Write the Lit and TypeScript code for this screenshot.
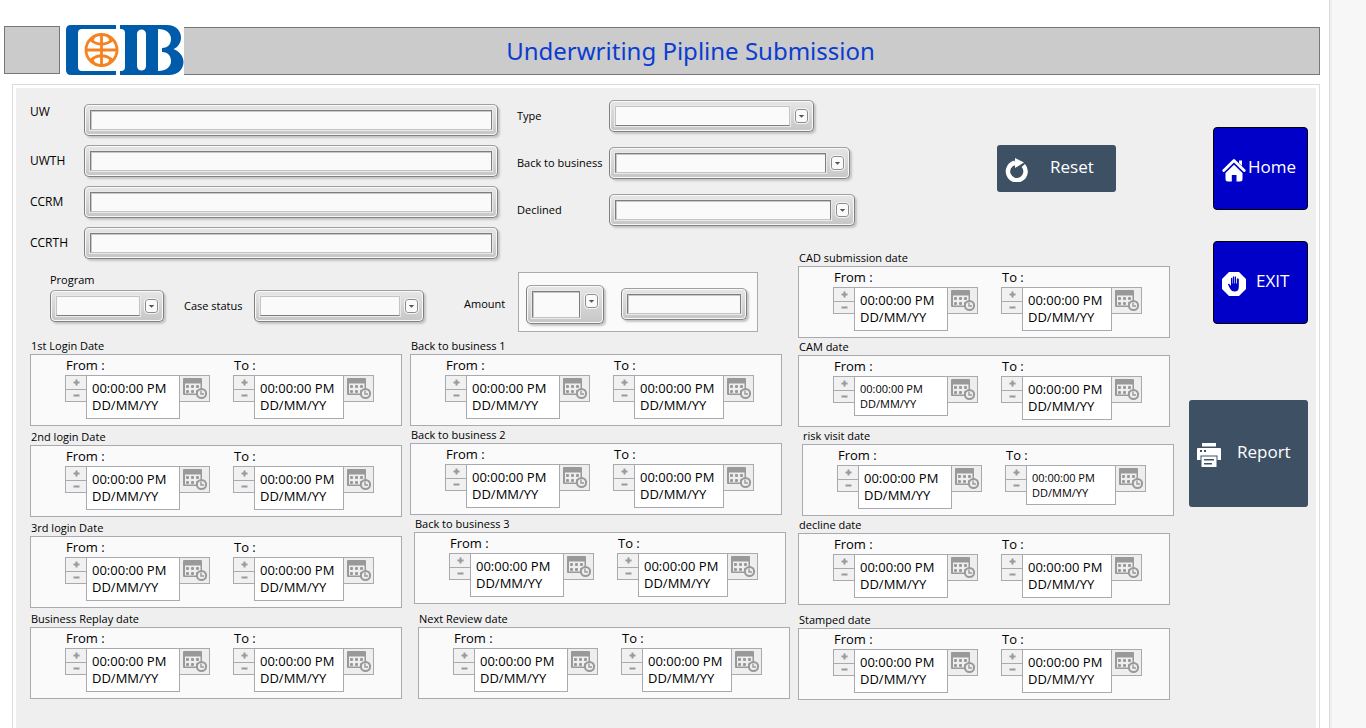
import { LitElement, html, svg, css, nothing } from "lit";
import { customElement } from "lit/decorators.js";
import { classMap } from "lit/directives/class-map.js";

interface DateGroup {
  id: string;
  title: string;
  shift?: "one" | "two";
  spaced?: boolean;
  compact?: "from" | "to";
}

const LOGIN_DATES: DateGroup[] = [
  { id: "login1", title: "1st Login Date" },
  { id: "login2", title: "2nd login Date" },
  { id: "login3", title: "3rd login Date" },
  { id: "replay", title: "Business Replay date" },
];

const BACK_DATES: DateGroup[] = [
  { id: "back1", title: "Back to business 1" },
  { id: "back2", title: "Back to business 2" },
  { id: "back3", title: "Back to business 3", shift: "one" },
  { id: "review", title: "Next Review date", shift: "two", spaced: true },
];

const DECISION_DATES: DateGroup[] = [
  { id: "cad", title: "CAD submission date" },
  { id: "cam", title: "CAM date", compact: "from" },
  { id: "risk", title: "risk visit date", shift: "one", compact: "to" },
  { id: "decline", title: "decline date" },
  { id: "stamped", title: "Stamped date", spaced: true },
];

const EMPTY_DATE = "00:00:00 PM\nDD/MM/YY";

const logo = html`<svg class="logo" viewBox="0 0 118 50" role="img" aria-label="CIB">
  <path fill="#005bab" d="M5 0H50V4H16Q12 4 12 8V42Q12 46 16 46H50V50H5Q0 50 0 45V5Q0 0 5 0Z" />
  <path
    fill="#005bab"
    fill-rule="evenodd"
    d="M54 0H101C110 0 115 6 115 12.500C115 18 112 22 107.500 24C113 26 117.500 31 117.500 37C117.500 44 112 50 103 50H54V46H55Q59 46 59 42V8Q59 4 55 4H54Z
       M71 9V41C71 47 80 47 80 41V9C80 3 71 3 71 9Z
       M92 4V46C100 46 105 42 105 36C105 30 101 27 96 27V23C101 23 105 20 105 14C105 8 100 4 92 4Z"
  />
  <g fill="none" stroke="#f58220" stroke-width="2.800">
    <circle cx="35.500" cy="25" r="15.500" />
    <path d="M35.500 9V41M20 25H51M24 14.500Q35.500 24 47 14.500M24 35.500Q35.500 26 47 35.500" />
    <path stroke-width="2" d="M30 10Q26 14 27 17M41 10Q45 14 44 17M30 40Q26 36 27 33M41 40Q45 36 44 33" />
  </g>
</svg>`;

const resetIcon = html`<svg class="icon" viewBox="0 0 24 24" aria-hidden="true">
  <path fill="none" stroke="#fff" stroke-width="4.500" d="M18.300 7.500A8.800 8.800 0 1 1 10 4.800" />
  <path fill="#fff" d="M10 0L19 4.500L10 10Z" />
</svg>`;

const homeIcon = html`<svg class="icon" viewBox="0 0 24 24" aria-hidden="true">
  <path fill="none" stroke="#fff" stroke-width="2.800" stroke-linecap="round" stroke-linejoin="round" d="M1.800 12.500L12 2.600L22.200 12.500" />
  <path fill="#fff" d="M17 2.500H20V8L17 5Z" />
  <path fill="#fff" d="M12 6.800L20.500 15V21Q20.500 23.500 18 23.500H14.500V17H9.800V23.500H6Q3.500 23.500 3.500 21V15Z" />
</svg>`;

const exitIcon = html`<svg class="icon" viewBox="0 0 24 24" aria-hidden="true">
  <path fill="#fff" d="M7 0H17L24 7V17L17 24H7L0 17V7Z" />
  <path
    fill="#0000c8"
    d="M9 14V6.500Q9.600 5 10.300 6.500V11.500H10.800V5Q11.400 3.500 12.100 5V11.500H12.700V5Q13.300 3.500 14 5V11.500H14.800V7Q15.800 5.500 16.800 7V15Q16.800 19.500 12.500 19.500Q9.600 19.500 8.300 17L6 12.500Q6.500 11.200 7.800 12.500Z"
  />
</svg>`;

const printIcon = html`<svg class="icon" viewBox="0 0 24 24" aria-hidden="true">
  <path fill="#fff" d="M5 0H19V3.500H5Z" />
  <path fill="#fff" fill-rule="evenodd" d="M1 5H23Q24 5 24 6V17H20.500V12.500H3.500V17H0V6Q0 5 1 5ZM3 7V9H5V7ZM7 7V9H9V7Z" />
  <path fill="#fff" fill-rule="evenodd" d="M4.500 13.500H19.500V24H4.500ZM7 16V17.500H17V16ZM7 20V21.500H15V20Z" />
</svg>`;

const dots = [6, 11, 16].map((x) => [9, 14].map((y) => svg`<rect x=${x} y=${y} width="3" height="3" rx="1" />`));

const calendarIcon = html`<svg class="calendar-icon" viewBox="0 0 29 25" aria-hidden="true">
  <g fill="#999">
    <path fill-rule="evenodd" d="M4 2H21Q22 2 22 3V19H4Q3 19 3 18V3Q3 2 4 2ZM5 7.500V17.500H20.500V7.500Z" />
    ${dots}
  </g>
  <circle cx="21.500" cy="17.500" r="4.600" fill="#eee" stroke="#999" stroke-width="2" />
  <path fill="none" stroke="#999" stroke-width="1.400" d="M21 14.500V18H24" />
</svg>`;

const dropArrow = html`<span class="drop" aria-hidden="true">
  <svg viewBox="0 0 12 12"><path fill="#555" d="M3 5H9L6 8Z" /></svg>
</span>`;

@customElement("app-root")
export class AppRoot extends LitElement {
  static styles = css`
    :host {
      display: flex;
      min-height: 100vh;
      background: #fff;
      color: #000;
      font: 11px/16px "Segoe UI", "Open Sans", "Noto Sans", sans-serif;
    }
    * {
      box-sizing: border-box;
    }
    button,
    input,
    select,
    textarea {
      font: inherit;
      color: inherit;
      margin: 0;
    }
    label {
      white-space: nowrap;
    }
    .page {
      flex: 1;
      min-width: 0;
      display: flex;
      flex-direction: column;
    }
    .gutter {
      flex: 0 0 37px;
      background: #f7f7f7;
      border-left: 1px solid #d9d9d9;
      box-shadow: inset 2px 0 #efefef;
    }
    .header {
      display: flex;
      align-items: center;
      padding: 25px 9px 0 4px;
    }
    .stub,
    .bar {
      height: 48px;
      background: #cbcbcb;
      border: 1px solid #777;
    }
    .stub {
      flex: 0 0 56px;
      margin-right: 6px;
    }
    .logo {
      flex: 0 0 118px;
      height: 50px;
    }
    .bar {
      flex: 1;
      align-self: flex-end;
      display: flex;
      align-items: center;
      justify-content: center;
      border-left: 0;
      padding-right: 122px;
    }
    .title {
      margin: 0;
      font-family: "Segoe UI", "Noto Sans", sans-serif;
      font-size: 24px;
      font-weight: 400;
      line-height: 32px;
      color: #0a3cd2;
    }
    .panel {
      flex: 1;
      margin: 9px 9px 0 12px;
      padding: 3px 3px 0;
      border: 1px solid #dcdcdc;
      border-bottom: 0;
      display: flex;
    }
    .workspace {
      flex: 1;
      display: grid;
      grid-template-columns: minmax(0, 2fr) minmax(0, 1fr) 120px;
      grid-template-rows: 161px auto 1fr;
      column-gap: 12px;
      padding: 0 8px 24px 14px;
      background: #efefef;
    }
    .entry {
      grid-area: 1 / 1 / 3 / 3;
      display: flex;
      align-items: flex-start;
      padding-top: 12px;
    }
    .fields,
    .choices {
      display: grid;
      align-items: center;
    }
    .fields {
      flex: 0 1 468px;
      grid-template-columns: 54px 1fr;
      row-gap: 9px;
      padding-top: 4px;
      margin-right: 19px;
      font-size: 12px;
    }
    .choices {
      grid-template-columns: 92px auto;
      row-gap: 15px;
    }
    .high {
      align-self: start;
    }
    .bevel {
      display: flex;
      height: 32px;
      padding: 5px;
      border: 1px solid #808080;
      border-top-color: #a0a0a0;
      border-radius: 5px;
      background: linear-gradient(#e6e6e6, #c6c6c6);
      box-shadow:
        inset 0 0 0 1px #f8f8f8,
        2px 2px 2px #c4c4c4;
    }
    .well {
      flex: 1;
      min-width: 0;
      width: 100%;
      padding: 0 4px;
      appearance: none;
      border: 1px solid #7d7d7d;
      border-bottom-color: #c4c4c4;
      border-radius: 0;
      outline: 1px solid #e9e9e9;
      background: #fafafa;
      box-shadow: inset 1px 1px #c8c8c8;
    }
    .soft {
      border-color: #c4c4c4;
      border-bottom-color: #7d7d7d;
      box-shadow: none;
    }
    .drop {
      flex: 0 0 13px;
      height: 14px;
      margin: 3px 0 0 5px;
      border: 1px solid #8c8c8c;
      border-radius: 3px;
      background: #fafafa;
      outline: 1px solid #f4f4f4;
      display: flex;
    }
    .drop svg {
      width: 100%;
    }
    .w-xs {
      width: 78px;
      height: 39px;
    }
    .w-s {
      width: 114px;
    }
    .w-m {
      width: 126px;
    }
    .w-l {
      width: 170px;
    }
    .w-xl {
      width: 205px;
    }
    .w-2xl {
      width: 241px;
    }
    .w-3xl {
      width: 246px;
    }
    .button {
      display: flex;
      align-items: center;
      padding: 0 8px 4px;
      border: 0;
      border-radius: 3px;
      color: #fff;
      text-decoration: none;
      text-align: left;
      font-size: 17px;
      line-height: 24px;
      font-weight: 500;
    }
    .slate {
      width: 119px;
      background: #3d5064;
    }
    .blue {
      width: 95px;
      height: 83px;
      background: #0000c8;
      border: 1px solid #000;
      border-radius: 4px;
    }
    .icon {
      flex: 0 0 24px;
      height: 24px;
      margin-top: 7px;
      margin-right: 16px;
    }
    .near .icon {
      margin-right: 2px;
    }
    .plain {
      font-size: 17px;
      font-weight: 400;
    }
    .plain .icon {
      margin-right: 10px;
    }
    .reset {
      height: 47px;
      margin: 45px 60px 0 auto;
    }
    .reset .icon {
      margin-right: 21px;
    }
    .report {
      height: 107px;
      margin-top: 45px;
    }
    .nav {
      grid-area: 1 / 3 / 4 / 4;
      display: flex;
      flex-direction: column;
      align-items: flex-end;
      gap: 31px;
      padding-top: 39px;
    }
    .lower {
      grid-area: 3 / 1;
      display: flex;
      flex-direction: column;
      gap: 5px;
      padding-top: 13px;
    }
    .case {
      display: flex;
      align-items: flex-end;
      column-gap: 20px;
      padding-left: 20px;
    }
    .stacked {
      display: grid;
      row-gap: 2px;
      padding-bottom: 10px;
    }
    .inline {
      display: flex;
      padding-bottom: 10px;
      line-height: 32px;
    }
    .inline .caption {
      width: 70px;
    }
    .amount {
      display: flex;
      align-items: center;
      margin-left: 20px;
    }
    .amount .caption {
      width: 54px;
      padding-top: 4px;
    }
    .frame {
      display: flex;
      align-items: center;
      gap: 17px;
      height: 60px;
      width: 240px;
      padding: 4px 7px 0;
      border: 1px solid #a9aab0;
      background: #fafafa;
    }
    .dates {
      display: grid;
      grid-template-columns: 1fr 1fr;
      column-gap: 4px;
    }
    .stack {
      display: flex;
      flex-direction: column;
    }
    .loose {
      gap: 2px;
    }
    .decisions {
      grid-area: 2 / 2 / 4 / 3;
      padding-right: 2px;
    }
    .group {
      margin-right: 4px;
    }
    .one {
      margin-left: 4px;
      margin-right: 0;
    }
    .two {
      margin-left: 8px;
      margin-right: -4px;
    }
    .spaced {
      margin-top: 6px;
    }
    .group-title {
      margin: 0;
      padding-left: 1px;
      font-size: 11px;
      font-weight: 400;
      line-height: 17px;
    }
    .range {
      display: grid;
      grid-template-columns: 168px 1fr;
      height: 72px;
      padding: 2px 0 0 34px;
      border: 1px solid #a9aab0;
      background: #fafafa;
    }
    .caption-date {
      display: block;
      padding: 0 0 1px 1px;
      font-size: 13px;
      line-height: 17px;
    }
    .picker {
      display: flex;
      align-items: flex-start;
    }
    .spin {
      flex: 0 0 21px;
      height: 27px;
      display: grid;
      grid-template-rows: 1fr 1fr;
      border: 1px solid #a9aab0;
      border-right: 0;
    }
    .step {
      padding: 0;
      border: 0;
      background: #f1f1f1;
      display: grid;
      place-items: center;
    }
    .step + .step {
      border-top: 1px solid #a9aab0;
    }
    .step svg {
      width: 7px;
      height: 7px;
    }
    .value {
      display: block;
      width: 94px;
      height: 44px;
      padding: 4px 0 0 5px;
      border: 1px solid #a9aab0;
      border-radius: 0;
      background: #fff;
      resize: none;
      overflow: hidden;
      white-space: pre;
      font-size: 13px;
      line-height: 17px;
    }
    .narrow {
      width: 90px;
    }
    .compact {
      height: 40px;
      font-size: 11px;
      line-height: 15px;
    }
    .calendar {
      width: 30px;
      height: 27px;
      padding: 0;
      border: 1px solid #a9aab0;
      border-left: 0;
      background: #eee;
      display: grid;
    }
    .calendar-icon {
      width: 29px;
      height: 25px;
    }
  `;

  private picker(id: string, caption: string, title: string, narrow: boolean, compact: boolean) {
    return html`<div>
      <label class="caption-date" for=${id}>${caption} :</label>
      <div class="picker">
        <div class="spin">
          <button class="step" type="button" aria-label="Increase ${title} ${caption}">
            <svg viewBox="0 0 7 7"><path stroke="#999" stroke-width="2" d="M0.500 3.500H6.500M3.500 0.500V6.500" /></svg>
          </button>
          <button class="step" type="button" aria-label="Decrease ${title} ${caption}">
            <svg viewBox="0 0 7 7"><path stroke="#999" stroke-width="2" d="M0.500 3.500H6.500" /></svg>
          </button>
        </div>
        <textarea class=${classMap({ value: true, narrow, compact })} id=${id} rows="2" spellcheck="false" .value=${EMPTY_DATE}></textarea>
        <button class="calendar" type="button" aria-label="Open calendar for ${title} ${caption}">${calendarIcon}</button>
      </div>
    </div>`;
  }

  private dateGroup(g: DateGroup) {
    const classes = { group: true, one: g.shift === "one", two: g.shift === "two", spaced: !!g.spaced };
    return html`<section class=${classMap(classes)} aria-labelledby="${g.id}-title">
      <h2 class="group-title" id="${g.id}-title">${g.title}</h2>
      <div class="range">
        ${this.picker(`${g.id}-from`, "From", g.title, false, g.compact === "from")}
        ${this.picker(`${g.id}-to`, "To", g.title, true, g.compact === "to")}
      </div>
    </section>`;
  }

  private textField(id: string, label: string, high = false) {
    return html`<label class=${high ? "high" : nothing} for=${id}>${label}</label>
      <div class="bevel"><input class="well" id=${id} type="text" /></div>`;
  }

  private select(id: string, size: string, soft = false) {
    return html`<div class="bevel ${size}">
      <select class=${classMap({ well: true, soft })} id=${id}>
        <option></option>
      </select>
      ${dropArrow}
    </div>`;
  }

  render() {
    return html`
      <main class="page">
        <header class="header">
          <div class="stub"></div>
          ${logo}
          <div class="bar"><h1 class="title">Underwriting Pipline Submission</h1></div>
        </header>
        <div class="panel">
          <div class="workspace">
            <div class="entry">
              <div class="fields">
                ${this.textField("uw", "UW", true)} ${this.textField("uwth", "UWTH")}
                ${this.textField("ccrm", "CCRM")} ${this.textField("ccrth", "CCRTH")}
              </div>
              <div class="choices">
                <label for="type">Type</label>${this.select("type", "w-xl", true)}
                <label for="back">Back to business</label>${this.select("back", "w-2xl")}
                <label for="declined">Declined</label>${this.select("declined", "w-3xl")}
              </div>
              <button class="button slate reset" type="reset">${resetIcon}Reset</button>
            </div>
            <div class="lower">
              <div class="case">
                <div class="stacked">
                  <label for="program">Program</label>
                  ${this.select("program", "w-s", true)}
                </div>
                <div class="inline">
                  <label class="caption" for="status">Case status</label>
                  ${this.select("status", "w-l", true)}
                </div>
                <div class="amount">
                  <label class="caption" for="amount">Amount</label>
                  <div class="frame">
                    <div class="bevel w-xs">
                      <select class="well" id="operator" aria-label="Amount comparison"><option></option></select>
                      ${dropArrow}
                    </div>
                    <div class="bevel w-m"><input class="well" id="amount" type="text" /></div>
                  </div>
                </div>
              </div>
              <div class="dates">
                <div class="stack loose">${LOGIN_DATES.map((g) => this.dateGroup(g))}</div>
                <div class="stack">${BACK_DATES.map((g) => this.dateGroup(g))}</div>
              </div>
            </div>
            <div class="stack decisions">${DECISION_DATES.map((g) => this.dateGroup(g))}</div>
            <nav class="nav">
              <a class="button blue near" href="#home">${homeIcon}Home</a>
              <a class="button blue plain" href="#exit">${exitIcon}EXIT</a>
              <button class="button slate report" type="button">${printIcon}Report</button>
            </nav>
          </div>
        </div>
      </main>
      <div class="gutter"></div>
    `;
  }
}
